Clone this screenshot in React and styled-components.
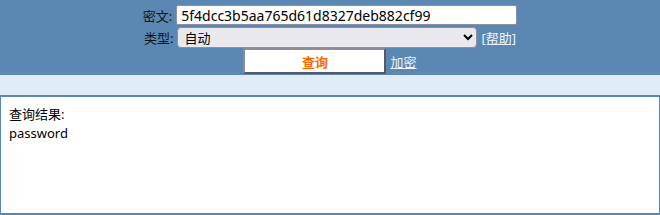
import React from "react";
import styled, { createGlobalStyle } from "styled-components";

const GlobalStyle = createGlobalStyle`
  body {
    margin: 0;
    background: #ffffff;
    font-family: "Noto Sans", "Noto Sans CJK SC", sans-serif;
    font-size: 13px;
    color: #000;
  }
`;

const Header = styled.div`
  background: #5b87b3;
  height: 75px;
  padding-top: 4px;
  box-sizing: border-box;
  display: flex;
  flex-direction: column;
  align-items: center;
`;

const Row = styled.div`
  display: flex;
  align-items: center;
  gap: ${(props) => props.gap || 4}px;
  height: ${(props) => props.h}px;
`;

const Label = styled.span`
  color: #111;
  font-size: 13px;
`;

const TextInput = styled.input`
  width: 341px;
  height: 20px;
  box-sizing: border-box;
  border: 1px solid #8f8f9d;
  border-radius: 2px;
  padding: 0 4px;
  font-family: "Noto Sans", "Noto Sans CJK SC", sans-serif;
  font-size: 14px;
  color: #000;
  background: #fff;
  outline: none;
`;

const Select = styled.select`
  width: 300px;
  height: 21px;
  box-sizing: border-box;
  border: 1px solid #8f8f9d;
  border-radius: 4px;
  background: #e9e9ed;
  font-family: "Noto Sans", "Noto Sans CJK SC", sans-serif;
  font-size: 13px;
  color: #000;
  padding: 0 2px;
`;

const HeaderLink = styled.a`
  color: #eef6ff;
  text-decoration: underline;
  font-size: 13px;
  cursor: pointer;
`;

const SubmitButton = styled.button`
  width: 143px;
  height: 26px;
  box-sizing: border-box;
  background: #ffffff;
  border: 2px solid;
  border-color: #8f8a98 #5b5766 #5b5766 #8f8a98;
  color: #ff6600;
  font-weight: bold;
  font-size: 13px;
  font-family: "Noto Sans", "Noto Sans CJK SC", sans-serif;
  padding: 0;
`;

const Band = styled.div`
  background: #e1edf6;
  height: 20px;
`;

const ResultBox = styled.div`
  border: 1px solid #5b87b3;
  border-top-width: 2px;
  border-bottom-width: 2px;
  height: 120px;
  box-sizing: border-box;
  padding: 8px 8px;
  line-height: 19px;
`;

export default function App() {
  return (
    <>
      <GlobalStyle />
      <Header>
        <Row h={22}>
          <Label>密文:</Label>
          <TextInput defaultValue="5f4dcc3b5aa765d61d8327deb882cf99" />
        </Row>
        <Row h={22}>
          <Label>类型:</Label>
          <Select defaultValue="auto">
            <option value="auto">自动</option>
          </Select>
          <HeaderLink>[帮助]</HeaderLink>
        </Row>
        <Row h={26}>
          <SubmitButton>查询</SubmitButton>
          <HeaderLink>加密</HeaderLink>
        </Row>
      </Header>
      <Band />
      <ResultBox>
        <div>查询结果:</div>
        <div>password</div>
      </ResultBox>
    </>
  );
}
